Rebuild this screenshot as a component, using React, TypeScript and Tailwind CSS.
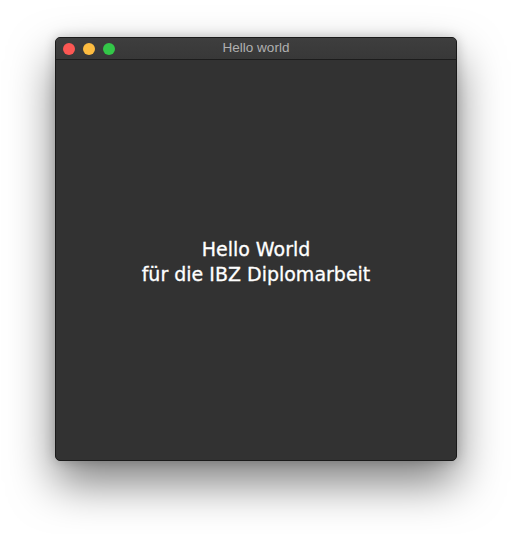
export default function App() {
  return (
    <div className="w-[512px] h-[534px] bg-white flex justify-center pt-[37px]" style={{ fontFamily: '"DejaVu Sans", Verdana, sans-serif' }}>
      <div className="w-[402px] h-[424px] rounded-[5px] bg-[#323232] border border-[#1a1a1a] shadow-[0_22px_45px_rgba(0,0,0,0.5),0_0_12px_rgba(0,0,0,0.2)] flex flex-col overflow-hidden">
        {/* Titelleiste */}
        <div className="relative h-[22px] shrink-0 bg-gradient-to-b from-[#3e3e3e] to-[#383838] border-b border-[#1c1c1c] flex items-center">
          <div className="flex items-center gap-[8px] pl-[7px]">
            <span className="w-[12px] h-[12px] rounded-full bg-[#fc5753]" />
            <span className="w-[12px] h-[12px] rounded-full bg-[#fdbc40]" />
            <span className="w-[12px] h-[12px] rounded-full bg-[#33c748]" />
          </div>
          <div className="absolute inset-0 flex items-center justify-center text-[13.5px] text-[#b0b0b0]" style={{ fontFamily: '"Liberation Sans", Arial, sans-serif' }}>
            Hello world
          </div>
        </div>
        {/* Inhalt */}
        <div className="flex-1 flex items-center justify-center pt-[4px]">
          <p className="text-center text-white text-[19px] leading-[25px] [-webkit-text-stroke:0.3px_white]">
            Hello World
            <br />
            für die IBZ Diplomarbeit
          </p>
        </div>
      </div>
    </div>
  )
}
